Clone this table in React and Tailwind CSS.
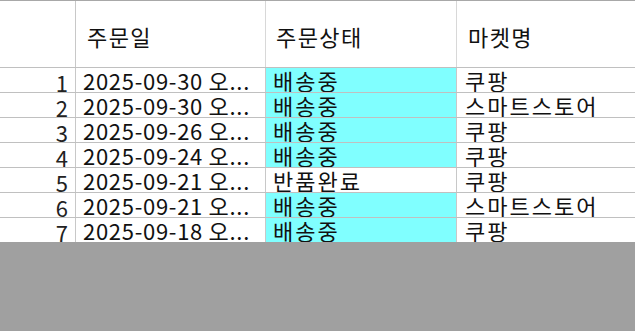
const rows = [
  { no: 1, date: "2025-09-30 오...", status: "배송중", market: "쿠팡" },
  { no: 2, date: "2025-09-30 오...", status: "배송중", market: "스마트스토어" },
  { no: 3, date: "2025-09-26 오...", status: "배송중", market: "쿠팡" },
  { no: 4, date: "2025-09-24 오...", status: "배송중", market: "쿠팡" },
  { no: 5, date: "2025-09-21 오...", status: "반품완료", market: "쿠팡" },
  { no: 6, date: "2025-09-21 오...", status: "배송중", market: "스마트스토어" },
  { no: 7, date: "2025-09-18 오...", status: "배송중", market: "쿠팡" },
];

const font = { fontFamily: '"Noto Sans CJK KR", "Noto Sans", sans-serif' };

export default function App() {
  return (
    <div className="w-[635px] h-[331px] bg-[#a0a0a0] overflow-hidden flex flex-col" style={font}>
      {/* Header */}
      <div className="h-[68px] shrink-0 bg-white border-t border-[#a8a8a8] border-b border-b-[#c0c0c0] grid grid-cols-[76px_190px_191px_1fr] text-[22px] tracking-[1.4px] text-[#111]">
        <div className="border-r border-[#c8c8c8]" />
        <div className="border-r border-[#d8d8d8] flex items-center pl-[11px] pt-[4px]">주문일</div>
        <div className="border-r border-[#d8d8d8] flex items-center pl-[10px] pt-[4px]">주문상태</div>
        <div className="flex items-center pl-[11px] pt-[4px]">마켓명</div>
      </div>

      {/* Body */}
      {rows.map((r) => (
        <div
          key={r.no}
          className="h-[25px] shrink-0 bg-white border-b border-[#c0c0c0] last:border-b-0 last:h-[24px] grid grid-cols-[76px_190px_191px_1fr] text-[22px] leading-[24px] tracking-[2px] text-[#111] overflow-hidden"
        >
          <div className="border-r border-[#c8c8c8] text-right pr-[7px] pt-[2px] tracking-normal text-[#222]">{r.no}</div>
          <div className="border-r border-[#c8c8c8] pl-[7px] tracking-[0.7px] whitespace-nowrap overflow-hidden">{r.date}</div>
          <div
            className={
              r.status === "배송중"
                ? "bg-[#80ffff] border-r border-[#c8c8c8] pl-[7px] whitespace-nowrap"
                : "bg-white border-r border-[#c8c8c8] pl-[7px] whitespace-nowrap"
            }
          >
            {r.status}
          </div>
          <div className="pl-[8px] whitespace-nowrap">{r.market}</div>
        </div>
      ))}
    </div>
  );
}
